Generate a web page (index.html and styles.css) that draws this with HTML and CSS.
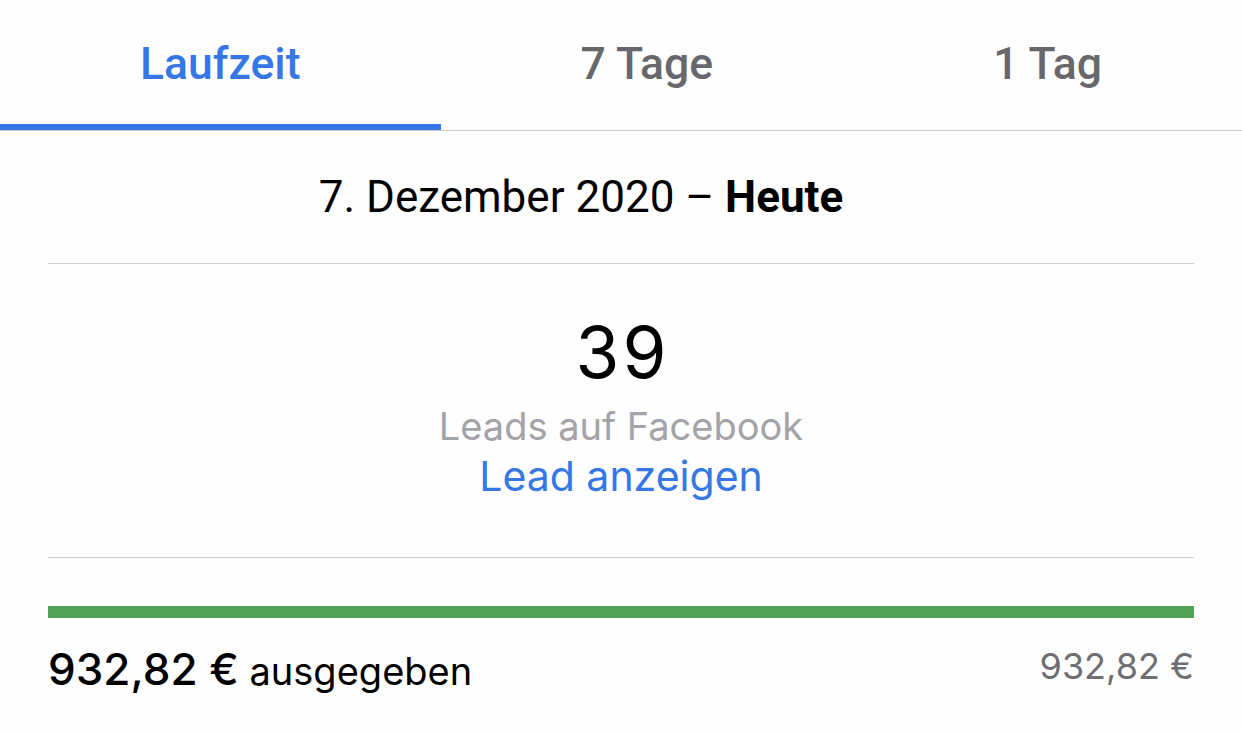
FILE: index.html
```html
<!DOCTYPE html>
<html lang="de">
<head>
<meta charset="utf-8">
<title>Leads</title>
<link rel="stylesheet" href="styles.css">
</head>
<body>
<div class="screen">
  <nav class="tabs">
    <div class="tab active">Laufzeit</div>
    <div class="tab">7 Tage</div>
    <div class="tab">1 Tag</div>
  </nav>
  <div class="content">
    <div class="date-row">7. Dezember 2020 – <strong>Heute</strong></div>
    <div class="metric">
      <div class="metric-value">39</div>
      <div class="metric-label">Leads auf Facebook</div>
      <div class="metric-link">Lead anzeigen</div>
    </div>
    <div class="budget">
      <div class="budget-bar"><div class="budget-fill" style="width:100%"></div></div>
      <div class="budget-row">
        <div class="spent"><span class="spent-amount">932,82 €</span> ausgegeben</div>
        <div class="total">932,82 €</div>
      </div>
    </div>
  </div>
</div>
</body>
</html>
```
FILE: styles.css
```css
* { box-sizing: border-box; }
html, body { margin: 0; padding: 0; background: #fefefe; }
body { width: 1242px; height: 734px; overflow: hidden; font-family: Roboto, "Liberation Sans", sans-serif; color: #000; }
.screen { display: flex; flex-direction: column; }

.tabs { display: flex; border-bottom: 1px solid #c9c9cc; }
.tab {
  flex: 1 1 auto;
  height: 130px;
  line-height: 128px;
  border-bottom: 6px solid transparent;
  text-align: center;
  font-size: 44.5px;
  font-weight: 500;
  color: #68686c;
}
.tab.active { color: #3578e5; border-bottom-color: #3578e5; }

.content { display: flex; flex-direction: column; padding: 0 48px; }

.date-row {
  height: 133px;
  line-height: 132px;
  border-bottom: 1px solid #d2d2d4;
  text-align: center;
  padding-right: 80px;
  font-size: 44px;
  font-weight: 400;
}
.date-row strong { font-weight: 700; }

.metric {
  display: flex; flex-direction: column; align-items: center;
  padding: 53px 0 56px;
  border-bottom: 1px solid #d2d2d4;
  font-family: Inter, "Liberation Sans", sans-serif;
}
.metric-value { font-size: 71px; line-height: 70px; font-weight: 400; letter-spacing: 3px; padding-left: 3px; }
.metric-label { margin-top: 14px; font-size: 38px; line-height: 50px; color: #a3a3a8; }
.metric-link { font-size: 41px; line-height: 50px; color: #3578e5; }

.budget { display: flex; flex-direction: column; padding-top: 48px; }
.budget-bar { height: 12px; background: #e5e5ea; }
.budget-fill { height: 100%; background: #53a157; }
.budget-row { display: flex; justify-content: space-between; align-items: flex-start; font-family: Inter, "Liberation Sans", sans-serif; }
.spent { font-size: 38px; line-height: 103px; }
.spent-amount { font-size: 44px; font-weight: 500; }
.total { font-size: 36px; line-height: 96px; color: #6f6f73; }
```
